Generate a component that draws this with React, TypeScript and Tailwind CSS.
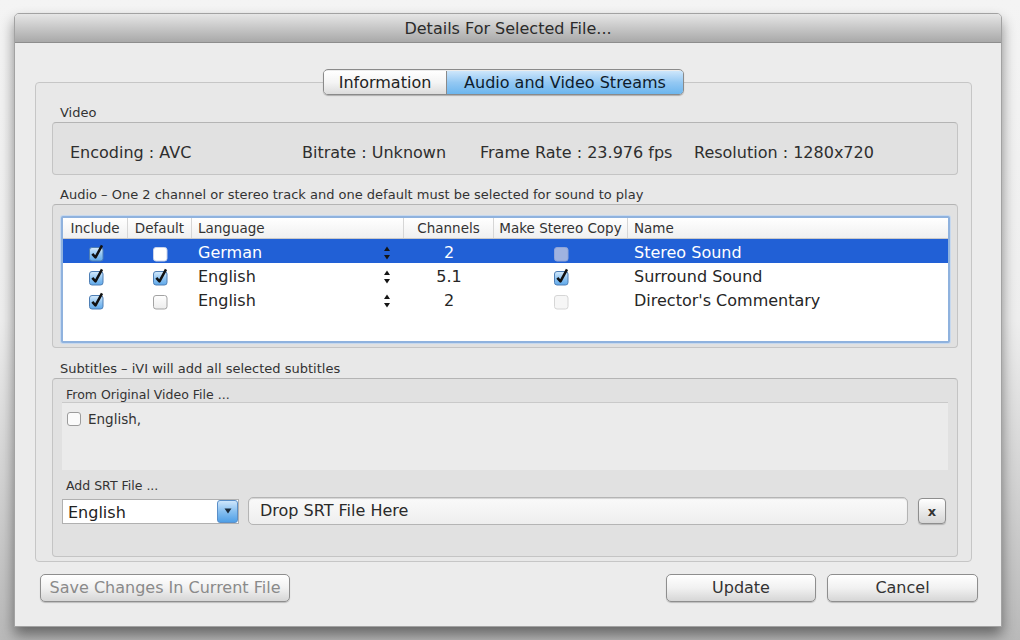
import type { ReactNode } from 'react'

type BoxState = 'checked' | 'empty' | 'emptySel' | 'disabled' | 'disabledSel'

type Track = {
  include: BoxState
  def: BoxState
  language: string
  channels: string
  stereo: BoxState
  name: string
  selected?: boolean
}

const tracks: Track[] = [
  { include: 'checked', def: 'emptySel', language: 'German', channels: '2', stereo: 'disabledSel', name: 'Stereo Sound', selected: true },
  { include: 'checked', def: 'checked', language: 'English', channels: '5.1', stereo: 'checked', name: 'Surround Sound' },
  { include: 'checked', def: 'empty', language: 'English', channels: '2', stereo: 'disabled', name: "Director's Commentary" },
]

const boxFill: Record<BoxState, { fill: string; stroke: string }> = {
  checked: { fill: 'url(#cbBlue)', stroke: '#4f7fb5' },
  empty: { fill: 'url(#cbWhite)', stroke: '#a3a3a3' },
  emptySel: { fill: '#ffffff', stroke: '#c9d3ea' },
  disabled: { fill: '#f6f6f6', stroke: '#d6d6d6' },
  disabledSel: { fill: '#9fb2e0', stroke: '#8fa4d8' },
}

const CheckBox = ({ state }: { state: BoxState }) => {
  const { fill, stroke } = boxFill[state]
  return (
    <svg width="17" height="18" viewBox="0 0 17 18" className="block">
      <defs>
        <linearGradient id="cbBlue" x1="0" y1="0" x2="0" y2="1">
          <stop offset="0" stopColor="#d6ebfc" />
          <stop offset="0.5" stopColor="#93c6f2" />
          <stop offset="1" stopColor="#5ea8ea" />
        </linearGradient>
        <linearGradient id="cbWhite" x1="0" y1="0" x2="0" y2="1">
          <stop offset="0" stopColor="#ffffff" />
          <stop offset="1" stopColor="#ececec" />
        </linearGradient>
      </defs>
      <rect x="1.5" y="3.5" width="13.5" height="13.5" rx="2.5" fill={fill} stroke={stroke} />
      {state === 'checked' ? (
        <path d="M4.3 9.8 L7.5 13.4 L14 1.4" fill="none" stroke="#111" strokeWidth="2.5" strokeLinejoin="round" />
      ) : null}
    </svg>
  )
}

const Stepper = () => (
  <svg width="8" height="16" viewBox="0 0 8 16" className="block">
    <polygon points="4,1.5 7,6 1,6" fill="#151515" />
    <polygon points="1,10 7,10 4,14.5" fill="#151515" />
  </svg>
)

const AquaButton = ({ children, className, disabled }: { children: ReactNode; className: string; disabled?: boolean }) => (
  <button
    type="button"
    className={`flex h-[28px] items-center justify-center rounded-[5px] border border-[#8e8e8e] bg-gradient-to-b from-[#ffffff] via-[#f1f1f1] to-[#d6d6d6] text-[16px] shadow-[0_1px_1px_rgba(0,0,0,0.2)] ${disabled ? 'text-[#8a8a8a]' : 'text-[#333]'} ${className}`}
  >
    {children}
  </button>
)

const cols = 'grid grid-cols-[65px_64px_212px_90px_134px_1fr]'

const AudioTable = () => (
  <div className="h-[127px] overflow-hidden rounded-[2px] border-2 border-[#8fb2de] bg-white shadow-[0_0_0_1px_#c6d8ee]">
    <div className={`${cols} h-[21px] border-b border-[#c9c9c9] bg-gradient-to-b from-white to-[#f0f0f0] text-[13.5px] leading-[20px] text-[#333]`}>
      <div className="border-r border-[#d6d6d6] text-center">Include</div>
      <div className="border-r border-[#d6d6d6] text-center">Default</div>
      <div className="border-r border-[#d6d6d6] pl-[6px]">Language</div>
      <div className="border-r border-[#d6d6d6] text-center">Channels</div>
      <div className="border-r border-[#d6d6d6] text-center">Make Stereo Copy</div>
      <div className="pl-[6px]">Name</div>
    </div>
    {tracks.map((track) => (
      <div
        key={track.name}
        className={`${cols} h-[24px] items-center pt-[2px] text-[16px] ${track.selected ? 'bg-[#2160d6] text-white' : 'text-[#262626]'}`}
      >
        <div className="flex justify-center pl-[1px]">
          <CheckBox state={track.include} />
        </div>
        <div className="flex justify-center">
          <CheckBox state={track.def} />
        </div>
        <div className="flex items-center justify-between pl-[6px] pr-[13px]">
          <span>{track.language}</span>
          <Stepper />
        </div>
        <div className="text-center">{track.channels}</div>
        <div className="flex justify-center">
          <CheckBox state={track.stereo} />
        </div>
        <div className="pl-[6px]">{track.name}</div>
      </div>
    ))}
  </div>
)

const groupBox = 'rounded-[4px] border border-[#c4c4c4] border-t-[#b4b4b4] bg-[#e1e1e1]'
const label = 'h-[18px] pl-[8px] pt-[2px] text-[13px] leading-[16px] text-[#333]'

export default function App() {
  return (
    <div className="h-[640px] w-[1020px] overflow-hidden bg-gradient-to-b from-[#f4f4f4] via-[#eeeeee] to-[#b9b9b9] pl-[14px] pt-[13px] font-['DejaVu_Sans',sans-serif]">
      <div className="flex h-[614px] w-[988px] flex-col overflow-hidden rounded-t-[5px] border border-[#a2a2a2] bg-[#ececec] shadow-[0_8px_14px_rgba(0,0,0,0.45)]">
        <div className="flex h-[29px] shrink-0 items-center justify-center border-b border-[#8d8d8d] bg-gradient-to-b from-[#e6e6e6] to-[#a9a9a9] pt-[2px] text-[16px] text-[#2b2b2b]">
          Details For Selected File...
        </div>

        <div className="flex flex-1 flex-col pl-[20px] pr-[29px] pt-[26px]">
          <div className="relative z-10 -mb-[13px] flex justify-center">
            <div className="flex h-[26px] overflow-hidden rounded-[5px] border border-[#8a8a8a] pt-[1px] text-[16px] shadow-[0_1px_1px_rgba(0,0,0,0.25)]">
              <div className="flex w-[123px] items-center justify-center border-r border-[#8a8a8a] bg-gradient-to-b from-white via-[#f4f4f4] to-[#dcdcdc] text-[#222]">
                Information
              </div>
              <div className="flex w-[236px] items-center justify-center bg-gradient-to-b from-[#cde6fb] via-[#93c8f3] to-[#6cb6ee] text-[#0e1c2c]">
                Audio and Video Streams
              </div>
            </div>
          </div>

          <div className="flex h-[480px] flex-col rounded-[4px] border border-[#c6c6c6] bg-[#e8e8e8] pl-[16px] pr-[13px] pt-[20px]">
            <div className={label}>Video</div>
            <div className={`mt-[1px] grid h-[53px] grid-cols-[232px_178px_214px_1fr] items-center pl-[17px] pt-[8px] text-[16px] text-[#2e2e2e] ${groupBox}`}>
              <span>Encoding : AVC</span>
              <span>Bitrate : Unknown</span>
              <span>Frame Rate : 23.976 fps</span>
              <span>Resolution : 1280x720</span>
            </div>

            <div className={`mt-[10px] ${label}`}>
              Audio – One 2 channel or stereo track and one default must be selected for sound to play
            </div>
            <div className={`mt-[1px] h-[144px] pb-[4px] pl-[8px] pr-[7px] pt-[11px] ${groupBox}`}>
              <AudioTable />
            </div>

            <div className={`mt-[11px] ${label}`}>Subtitles – iVI will add all selected subtitles</div>
            <div className={`mt-[1px] flex h-[179px] flex-col pl-[9px] pr-[9px] pt-[8px] ${groupBox}`}>
              <div className="h-[15px] pl-[4px] text-[12.5px] leading-[15px] text-[#333]">From Original Video File ...</div>
              <div className="flex h-[68px] items-start gap-[6px] border-t border-[#c9c9c9] bg-[#ebebeb] pl-[4px] pt-[8px]">
                <svg width="16" height="16" viewBox="0 0 16 16" className="block">
                  <rect x="1.5" y="1.5" width="13" height="13" rx="2.5" fill="#fbfbfb" stroke="#9c9c9c" />
                </svg>
                <span className="text-[13.5px] leading-[16px] text-[#333]">English,</span>
              </div>
              <div className="mt-[8px] h-[15px] pl-[4px] text-[12.5px] leading-[15px] text-[#333]">Add SRT File ...</div>
              <div className="mt-[4px] flex items-center">
                <div className="flex h-[25px] w-[177px] items-stretch border border-[#b0b0b0] bg-white">
                  <span className="flex-1 pl-[5px] pt-[1px] text-[16px] leading-[24px] text-[#222]">English</span>
                  <span className="flex w-[21px] items-center justify-center rounded-[3px] border border-[#5b8fc8] bg-gradient-to-b from-[#cfe6fb] via-[#86bff0] to-[#4f9fe6]">
                    <svg width="8" height="6" viewBox="0 0 8 6">
                      <polygon points="0.5,0.5 7.5,0.5 4,5.5" fill="#1c2a3a" />
                    </svg>
                  </span>
                </div>
                <div className="ml-[9px] flex h-[28px] w-[660px] items-center rounded-[5px] border border-[#b4b4b4] bg-gradient-to-b from-[#fafafa] to-[#eeeeee] pl-[11px] text-[16px] text-[#2a2a2a] shadow-[inset_0_1px_1px_rgba(0,0,0,0.15)]">
                  Drop SRT File Here
                </div>
                <button
                  type="button"
                  className="ml-[10px] flex h-[26px] w-[28px] items-center justify-center rounded-[4px] border border-[#8e8e8e] bg-gradient-to-b from-white to-[#d6d6d6] text-[13px] font-bold leading-none text-[#333] shadow-[0_1px_1px_rgba(0,0,0,0.2)]"
                >
                  x
                </button>
              </div>
            </div>
          </div>

          <div className="-mr-[6px] ml-[5px] mt-[12px] flex items-center">
            <AquaButton className="w-[250px]" disabled>
              Save Changes In Current File
            </AquaButton>
            <div className="flex-1" />
            <AquaButton className="w-[150px]">Update</AquaButton>
            <AquaButton className="ml-[11px] w-[151px]">Cancel</AquaButton>
          </div>
        </div>
      </div>
    </div>
  )
}
